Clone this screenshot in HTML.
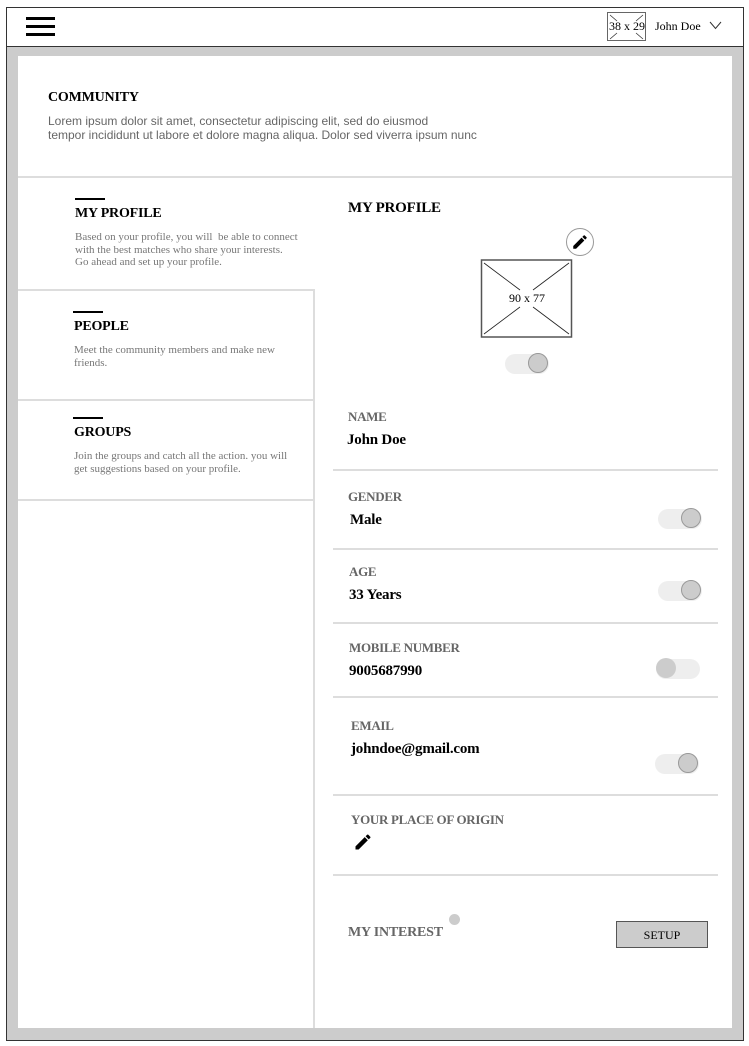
<!DOCTYPE html>
<html><head><meta charset="utf-8"><style>
*{margin:0;padding:0;box-sizing:border-box}
body{width:749px;height:1046px;background:#fff;position:relative;font-family:"Liberation Serif",serif;overflow:hidden}
.a{position:absolute}
.t{position:absolute;white-space:nowrap}
.h{font-weight:bold;color:#000;letter-spacing:-0.2px}
.lbl{font-weight:bold;color:#666;font-size:13px;letter-spacing:-0.3px}
.val{font-weight:bold;color:#000;font-size:15px;letter-spacing:-0.2px}
.desc{color:#777;font-size:11px;line-height:12.5px}
.hl{position:absolute;height:2px;background:#ddd}
.tr{position:absolute;width:44px;height:20px;border-radius:10px;background:#eee}
.kn{position:absolute;width:20px;height:20px;border-radius:50%;background:#ccc;border:1px solid #999}
.bar{position:absolute;height:2px;width:30px;background:#000}
</style></head><body>
<div class="a" style="left:6px;top:7px;width:738px;height:1034px;border:1px solid #333;background:#ccc"></div>
<div class="a" style="left:7px;top:8px;width:736px;height:39px;background:#fff;border-bottom:1px solid #333"></div>
<div class="a" style="left:26px;top:17px;width:29px;height:3px;background:#000"></div>
<div class="a" style="left:26px;top:25px;width:29px;height:3px;background:#000"></div>
<div class="a" style="left:26px;top:33px;width:29px;height:3px;background:#000"></div>
<svg class="a" style="left:607px;top:12px" width="40" height="30"><rect x="0.5" y="0.5" width="38" height="28" fill="#fff" stroke="#666"/><path d="M3 3L10 9M36 3L29 9M3 27L10 21M36 27L29 21" stroke="#333" stroke-width="0.8"/><text x="2" y="18" font-family="Liberation Serif" font-size="12">38 x 29</text></svg>
<div class="t" style="left:655px;top:19px;font-size:12px">John Doe</div>
<svg class="a" style="left:709px;top:21px" width="13" height="9"><path d="M1 1L6.5 7.5L12 1" fill="none" stroke="#333" stroke-width="1"/></svg>

<div class="a" style="left:18px;top:56px;width:714px;height:972px;background:#fff"></div>
<div class="t h" style="left:48px;top:90px;font-size:14px">COMMUNITY</div>
<div class="t" style="left:48px;top:114px;font-family:'Liberation Sans',sans-serif;font-size:12px;line-height:14px;color:#666">Lorem ipsum dolor sit amet, consectetur adipiscing elit, sed do eiusmod<br>tempor incididunt ut labore et dolore magna aliqua. Dolor sed viverra ipsum nunc</div>
<div class="hl" style="left:18px;top:176px;width:714px"></div>

<div class="bar" style="left:75px;top:198px"></div>
<div class="t h" style="left:75px;top:206px;font-size:14px">MY PROFILE</div>
<div class="t desc" style="left:75px;top:231px">Based on your profile, you will&nbsp; be able to connect<br>with the best matches who share your interests.<br>Go ahead and set up your profile.</div>
<div class="hl" style="left:18px;top:289px;width:297px"></div>
<div class="bar" style="left:73px;top:311px"></div>
<div class="t h" style="left:74px;top:319px;font-size:14px">PEOPLE</div>
<div class="t desc" style="left:74px;top:344px">Meet the community members and make new<br>friends.</div>
<div class="hl" style="left:18px;top:399px;width:297px"></div>
<div class="bar" style="left:73px;top:417px"></div>
<div class="t h" style="left:74px;top:425px;font-size:14px">GROUPS</div>
<div class="t desc" style="left:74px;top:450px">Join the groups and catch all the action. you will<br>get suggestions based on your profile.</div>
<div class="hl" style="left:18px;top:499px;width:297px"></div>
<div class="a" style="left:313px;top:290px;width:2px;height:738px;background:#ddd"></div>

<div class="t h" style="left:348px;top:200px;font-size:15px">MY PROFILE</div>
<div class="a" style="left:566px;top:228px;width:28px;height:28px;border-radius:50%;border:1px solid #999;background:#fff"></div>
<svg class="a" style="left:571px;top:233px" width="18" height="18" viewBox="0 0 24 24"><path d="M3 17.25V21h3.75L17.81 9.94l-3.75-3.75L3 17.25zM20.71 7.04a1 1 0 000-1.41l-2.34-2.34a1 1 0 00-1.41 0l-1.83 1.83 3.75 3.75 1.83-1.83z"/></svg>
<svg class="a" style="left:480px;top:259px" width="93" height="80"><rect x="1.5" y="1" width="90" height="77" fill="#fff" stroke="#555" stroke-width="1.5"/><path d="M4 4L40 31M89 4L53 31M4 75L40 48M89 75L53 48" stroke="#222" stroke-width="0.8"/><text x="29" y="43" font-family="Liberation Serif" font-size="12">90 x 77</text></svg>
<div class="tr" style="left:505px;top:354px"></div><div class="kn" style="left:528px;top:353px"></div>

<div class="t lbl" style="left:348px;top:409px">NAME</div>
<div class="t val" style="left:347px;top:432px">John Doe</div>
<div class="hl" style="left:333px;top:469px;width:385px"></div>
<div class="t lbl" style="left:348px;top:489px">GENDER</div>
<div class="t val" style="left:350px;top:512px">Male</div>
<div class="tr" style="left:658px;top:509px"></div><div class="kn" style="left:681px;top:508px"></div>
<div class="hl" style="left:333px;top:548px;width:385px"></div>
<div class="t lbl" style="left:349px;top:564px">AGE</div>
<div class="t val" style="left:349px;top:587px">33 Years</div>
<div class="tr" style="left:658px;top:581px"></div><div class="kn" style="left:681px;top:580px"></div>
<div class="hl" style="left:333px;top:622px;width:385px"></div>
<div class="t lbl" style="left:349px;top:640px">MOBILE NUMBER</div>
<div class="t val" style="left:349px;top:663px">9005687990</div>
<div class="tr" style="left:656px;top:659px"></div><div class="kn" style="left:656px;top:658px;border:none"></div>
<div class="hl" style="left:333px;top:696px;width:385px"></div>
<div class="t lbl" style="left:351px;top:718px">EMAIL</div>
<div class="t val" style="left:351px;top:741px">johndoe@gmail.com</div>
<div class="tr" style="left:655px;top:754px"></div><div class="kn" style="left:678px;top:753px"></div>
<div class="hl" style="left:333px;top:794px;width:385px"></div>
<div class="t lbl" style="left:351px;top:812px">YOUR PLACE OF ORIGIN</div>
<svg class="a" style="left:353px;top:832px" width="20" height="20" viewBox="0 0 24 24"><path d="M3 17.25V21h3.75L17.81 9.94l-3.75-3.75L3 17.25zM20.71 7.04a1 1 0 000-1.41l-2.34-2.34a1 1 0 00-1.41 0l-1.83 1.83 3.75 3.75 1.83-1.83z"/></svg>
<div class="hl" style="left:333px;top:874px;width:385px"></div>
<div class="t" style="left:348px;top:925px;font-size:14px;font-weight:bold;color:#666;letter-spacing:-0.2px">MY INTEREST</div>
<div class="a" style="left:449px;top:914px;width:11px;height:11px;border-radius:50%;background:#ccc"></div>
<div class="a" style="left:616px;top:921px;width:92px;height:27px;background:#ccc;border:1px solid #555;font-size:12px;text-align:center;line-height:26px">SETUP</div>
</body></html>
